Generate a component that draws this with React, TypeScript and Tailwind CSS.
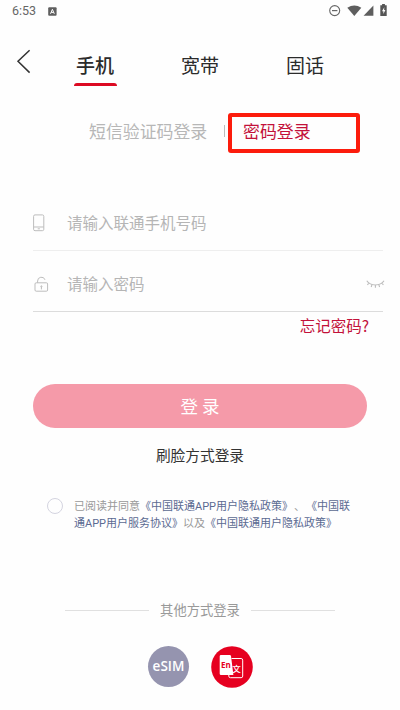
import { useState } from "react";

const tabs = ["手机", "宽带", "固话"];

function StatusBar() {
  return (
    <div className="flex h-[22px] items-center justify-between pl-[12px] pr-[13px] text-[#666]">
      <div className="flex items-center gap-[12px]">
        <span className="font-['Roboto'] text-[12.5px] leading-none">6:53</span>
        <svg width="9" height="9" viewBox="0 0 9 9">
          <rect x="0.2" y="0.2" width="8.4" height="8.6" rx="1" fill="#5f5f5f" />
          <path d="M2.5 6.8 4.4 2.3 6.3 6.8M3.2 5.4h2.4" fill="none" stroke="#fff" strokeWidth="1" />
        </svg>
      </div>
      <svg width="59" height="14" viewBox="0 0 59 14" className="-mt-[2px]">
        <circle cx="6.7" cy="7.6" r="5" fill="none" stroke="#666" strokeWidth="1.1" />
        <path d="M4 7.6h5.4" stroke="#666" strokeWidth="1.2" />
        <path d="M19.3 4.8q7-4.6 14 0L26.3 13z" fill="#5e5e5e" />
        <path d="M45.4 2.6V12.7H35.6z" fill="#5e5e5e" />
        <path d="M52.3 2.2h1.8V1.1h2.8v1.1h1.8v10.7h-6.4z" fill="#555" />
        <path d="M56.3 4.3 54 8.2h1.4v2.8l2-4h-1.3z" fill="#fff" />
      </svg>
    </div>
  );
}

function PhoneIcon() {
  return (
    <svg width="12" height="18" viewBox="0 0 12 18" fill="none" stroke="#bdbdbd">
      <rect x="0.6" y="0.9" width="10.2" height="15.8" rx="1.4" />
      <path d="M0.8 13h10M4.7 14.8h2.2" />
    </svg>
  );
}

function LockIcon() {
  return (
    <svg width="15" height="17" viewBox="0 0 15 17" fill="none" stroke="#bdbdbd">
      <rect x="1" y="6.8" width="12.6" height="8.4" rx="1.2" />
      <path d="M3.6 6.8V5a3.8 3.8 0 0 1 7.4-1.2M7.4 10.8v2.6" />
      <circle cx="7.4" cy="10.4" r="0.6" />
    </svg>
  );
}

function ClosedEyeIcon() {
  return (
    <svg width="19" height="9" viewBox="0 0 19 9" fill="none" stroke="#bbb" strokeWidth="1.1">
      <path d="M0.8 0.8C4.6 6.3 14.2 6.3 18 0.8M2.9 3.1 1.4 4.8M6 4.6 5.2 7M9.4 5v2.7M12.8 4.6l.8 2.4M15.9 3.1l1.5 1.7" />
    </svg>
  );
}

function TranslateIcon() {
  return (
    <svg width="42" height="42" viewBox="0 0 42 42">
      <circle cx="21" cy="21" r="20.8" fill="#e60020" />
      <path d="M20.5 12.5h9.6a1.6 1.6 0 0 1 1.6 1.6v16a1.6 1.6 0 0 1-1.6 1.6H19.4a1.6 1.6 0 0 1-1.6-1.6V28" fill="none" stroke="#fff" strokeWidth="1" />
      <text x="21.3" y="25.6" fontSize="8.5" fontWeight="500" fill="#fff" className="font-['Noto_Sans_CJK_SC']">文</text>
      <path d="M10 9h8.7a1.3 1.3 0 0 1 1.3 1.1l2.4 18.9H10a1.3 1.3 0 0 1-1.3-1.3V10.3A1.3 1.3 0 0 1 10 9z" fill="#fff" />
      <text x="10" y="21.6" fontSize="8" fontWeight="700" fill="#e60020" className="font-['Open_Sans']">En</text>
    </svg>
  );
}

export default function App() {
  const [active, setActive] = useState(0);
  const [agreed, setAgreed] = useState(false);

  return (
    <main className="h-[710px] w-[400px] overflow-hidden bg-[#fefefe] font-['Noto_Sans_CJK_SC',sans-serif]">
      <StatusBar />

      {/* Account type */}
      <nav className="flex h-[64px] items-end pl-[16px]">
        <button aria-label="返回" className="mb-[12px] mr-[42px]">
          <svg width="16" height="25" viewBox="0 0 16 25" fill="none" stroke="#333" strokeWidth="1.5">
            <path d="M13.6 1.2 2 12.3 13.6 23.6" />
          </svg>
        </button>
        <div className="flex gap-[63px]">
          {tabs.map((tab, i) => (
            <button key={tab} onClick={() => setActive(i)} className="flex w-[42px] flex-col items-center">
              <span className={i === active ? "text-[19px] leading-[28px] font-medium whitespace-nowrap text-[#2b2b2b]" : "text-[19px] leading-[28px] whitespace-nowrap text-[#2b2b2b]"}>
                {tab}
              </span>
              <span className={i === active ? "mt-[4px] h-[3px] w-[43px] rounded-t-full bg-[#dc0a22]" : "mt-[4px] h-[3px]"} />
            </button>
          ))}
        </div>
      </nav>

      {/* Login method */}
      <div className="mt-[27px] flex h-[40px] items-center pl-[89px] text-[16.9px]">
        <button className="-mt-[4px] w-[135px] text-left text-[#b7b7b7]">短信验证码登录</button>
        <span className="-mt-[4px] h-[12px] w-px bg-[#bbb]" />
        <button className="ml-[3px] flex h-[40px] w-[132px] rounded-[3px] border-4 border-[#fc1c0c] pl-[11px] text-[#c3113a]">
          <span className="mt-px leading-[26px]">密码登录</span>
        </button>
      </div>

      {/* Credentials */}
      <form className="mt-[43px] ml-[33px] w-[350px] text-[15.5px] text-[#b5b5b5]">
        <label className="flex h-[55px] border-b border-[#eee]">
          <span className="w-[34px] pt-[18px]"><PhoneIcon /></span>
          <span className="pt-[14px] leading-[24px]">请输入联通手机号码</span>
        </label>
        <label className="flex h-[61px] border-b border-[#dcdcdc]">
          <span className="w-[34px] pt-[25px] pl-px"><LockIcon /></span>
          <span className="pt-[20px] leading-[24px]">请输入密码</span>
          <span className="-mr-[2px] ml-auto pt-[29px]"><ClosedEyeIcon /></span>
        </label>
        <div className="flex justify-end pt-px pr-[14px] leading-[24px] text-[#c3113a]">忘记密码?</div>
      </form>

      <button className="mt-[47px] ml-[33px] flex h-[44px] w-[334px] items-center justify-center rounded-full bg-[#f59aa9] text-[17.5px] text-white">
        登 录
      </button>
      <div className="mt-[15px] text-center text-[14.7px] leading-[24px] text-[#333]">刷脸方式登录</div>

      {/* Agreement */}
      <div className="mt-[31px] flex pl-[47px]">
        <button
          aria-label="同意"
          onClick={() => setAgreed(!agreed)}
          className={agreed ? "size-[16px] rounded-full bg-[#dc0a22]" : "size-[16px] rounded-full border border-[#d4d4e0]"}
        />
        <p className="mt-px ml-[11px] font-['Roboto','Noto_Sans_CJK_SC',sans-serif] text-[11px] leading-[16.5px] whitespace-nowrap text-[#999] [text-spacing-trim:space-all]">
          已阅读并同意<span className="text-[#5b6a92]">《中国联通APP用户隐私政策》</span><span className="mx-px">、</span><span className="text-[#5b6a92]">《中国联<br />通APP用户服务协议》</span>以及<span className="text-[#5b6a92]">《中国联通用户隐私政策》</span>
        </p>
      </div>

      {/* Other ways */}
      <div className="mt-[68px] flex h-[20px] items-center justify-center text-[13.3px] text-[#999]">
        <span className="h-px w-[84px] bg-[#e0e0e0]" />
        <span className="w-[102px] text-center">其他方式登录</span>
        <span className="h-px w-[84px] bg-[#e0e0e0]" />
      </div>
      <div className="mt-[26px] flex gap-[22px] pl-[148px]">
        <button className="flex size-[41px] items-center justify-center rounded-full bg-[#9594af] font-['Open_Sans'] text-[13.5px] font-semibold text-white">
          eSIM
        </button>
        <button aria-label="English"><TranslateIcon /></button>
      </div>
    </main>
  );
}
